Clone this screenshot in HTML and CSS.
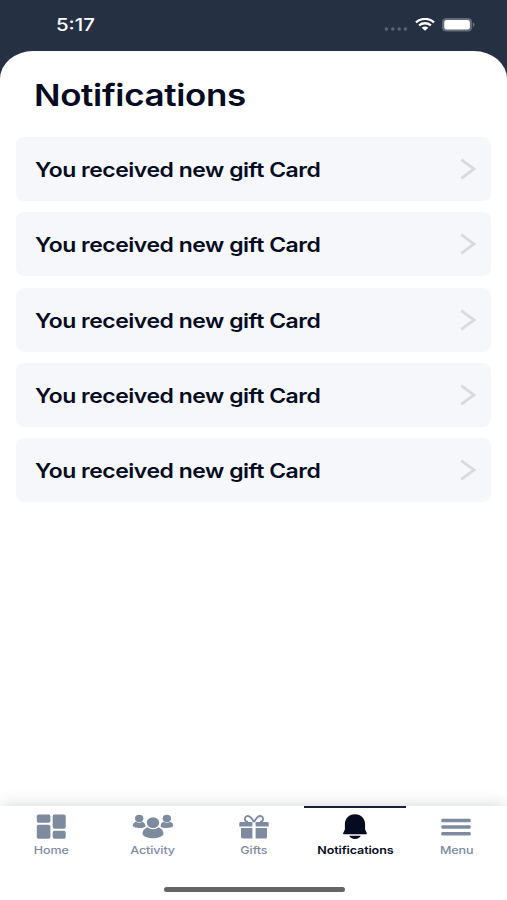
FILE: index.html
```html
<!DOCTYPE html>
<html lang="en">
<head>
<meta charset="utf-8">
<title>Notifications</title>
<link rel="stylesheet" href="styles.css">
</head>
<body>
<div class="app">
  <header class="status">
    <span class="time">5:17</span>
    <div class="indicators">
      <svg class="dots" width="24" height="4" viewBox="0 0 24 4"><circle cx="2.4" cy="2" r="1.8"/><circle cx="8.8" cy="2" r="1.8"/><circle cx="15.2" cy="2" r="1.8"/><circle cx="21.4" cy="2" r="1.8"/></svg>
      <svg class="wifi" width="20" height="13" viewBox="0 0 20 13"><path d="M1 4.3C6-.2 14-.2 19 4.3M4.1 7.4c3.4-2.9 8.4-2.9 11.8 0" fill="none" stroke="#fff" stroke-width="2.3"/><path d="M6.7 9.7c1.9-1.7 4.7-1.7 6.6 0L10 12.7z" fill="#fff"/></svg>
      <svg class="battery" width="33" height="14" viewBox="0 0 33 14"><rect x="0" y="0" width="30.2" height="13.6" rx="4.2" fill="#626b78"/><rect x="2.3" y="2.1" width="25.6" height="9.4" rx="2.3" fill="#fff"/><path d="M31 4.8c2.1.7 2.1 3.3 0 4z" fill="#6c7581"/></svg>
    </div>
  </header>
  <main class="sheet">
    <h1><span>Notifications</span></h1>
    <ul class="list">
      <li><span>You received new gift Card</span><svg width="16" height="22" viewBox="0 0 16 22"><path d="M1.3 1.7 14 11 1.3 20.3"/></svg></li>
      <li><span>You received new gift Card</span><svg width="16" height="22" viewBox="0 0 16 22"><path d="M1.3 1.7 14 11 1.3 20.3"/></svg></li>
      <li><span>You received new gift Card</span><svg width="16" height="22" viewBox="0 0 16 22"><path d="M1.3 1.7 14 11 1.3 20.3"/></svg></li>
      <li><span>You received new gift Card</span><svg width="16" height="22" viewBox="0 0 16 22"><path d="M1.3 1.7 14 11 1.3 20.3"/></svg></li>
      <li><span>You received new gift Card</span><svg width="16" height="22" viewBox="0 0 16 22"><path d="M1.3 1.7 14 11 1.3 20.3"/></svg></li>
    </ul>
  </main>
  <nav class="tabs">
    <a class="tab">
      <svg width="30" height="26" viewBox="0 0 30 26"><rect x=".8" y=".4" width="13.6" height="8.3" rx="1.8"/><rect x=".8" y="10.700" width="13.600" height="14" rx="1.800"/><rect x="16.700" y=".4" width="13" height="14.300" rx="1.800"/><rect x="16.700" y="16.700" width="13" height="8" rx="1.800"/></svg>
      <span>Home</span>
    </a>
    <a class="tab">
      <svg width="42" height="26" viewBox="0 0 42 26"><ellipse cx="7.200" cy="4.500" rx="4.200" ry="3.700"/><ellipse cx="34.800" cy="4.500" rx="4.200" ry="3.700"/><path d="M3.800 7.800C1.500 8.500.7 10.200.7 12.100c1.800 2.400 10.300 2.600 12.800.3-.2-2.200-1-3.900-3-4.600-1.900 1.200-4.700 1.200-6.700 0zM38.200 7.800c2.300.7 3.100 2.400 3.100 4.300-1.800 2.400-10.300 2.600-12.800.3.2-2.200 1-3.900 3-4.600 1.900 1.200 4.700 1.200 6.700 0z"/><ellipse cx="21" cy="8.600" rx="6.200" ry="5.400"/><path d="M15.500 13.300c-3.600 1.200-5.100 3.800-5 6.900 3 5.400 18 5.400 21 0 .1-3.100-1.400-5.700-5-6.900-2.900 2.500-8.100 2.500-11 0z"/></svg>
      <span>Activity</span>
    </a>
    <a class="tab">
      <svg width="30" height="26" viewBox="0 0 30 26"><path d="M14.900 8C12 2.400 9.700 1.400 7.700 2.200 4.800 3.500 5.500 7.800 9 8M15.100 8c2.900-5.600 5.200-6.600 7.200-5.800C25.200 3.500 24.500 7.800 21 8" fill="none" stroke="#7e8b9f" stroke-width="1.800"/><path d="M1.500 8h11.900v4.500H.3V9.200Q.3 8 1.500 8zM16.600 8h11.900q1.200 0 1.200 1.200v3.300H16.600zM2 14h11.400v10.500H3.400Q2 24.500 2 23.100zM16.600 14H28v9.100q0 1.400-1.400 1.400h-10z"/></svg>
      <span>Gifts</span>
    </a>
    <a class="tab active">
      <svg width="26" height="26" viewBox="0 0 26 26"><path d="M13 .2C6.600.2 2.900 4.600 2.900 10.400v5L1.300 18.700c-.5.9-.1 1.500 1 1.500h21.400c1.100 0 1.500-.6 1-1.500l-1.600-3.300v-5C23.100 4.600 19.400.2 13 .2zM7.300 21.800h11.400c-.8 4.100-10.600 4.100-11.400 0z"/></svg>
      <span>Notifications</span>
    </a>
    <a class="tab">
      <svg width="30" height="26" viewBox="0 0 30 26"><rect x=".3" y="4.700" width="29.400" height="3.500" rx="1.200"/><rect x=".3" y="11.300" width="29.400" height="3.500" rx="1.200"/><rect x=".3" y="18" width="29.400" height="3.500" rx="1.200"/></svg>
      <span>Menu</span>
    </a>
    <div class="home-bar"></div>
  </nav>
</div>
</body>
</html>
```
FILE: styles.css
```css
* { box-sizing: border-box; }
body { margin: 0; background: #253042; color: #050b20; font-family: Inter, "Liberation Sans", sans-serif; }
.app { height: 900px; display: flex; flex-direction: column; overflow: hidden; }
.status { height: 51px; flex: none; display: flex; justify-content: space-between; padding: 0 32px 0 56px; color: #fff; }
.time { height: 50px; line-height: 50px; font-size: 17px; font-weight: 500; transform: scaleX(1.2); transform-origin: left; }
.indicators { display: flex; align-items: center; height: 49px; }
.dots { fill: #596474; margin: 8px 7px 0 0; }
.wifi { margin-right: 7px; }
.sheet { flex: 1; background: #fff; border-radius: 33px 33px 0 0 / 28px 28px 0 0; padding: 25px 16px 0; }
h1 { margin: 0 0 0 18px; height: 61px; line-height: 39px; font-size: 30px; font-weight: 600; letter-spacing: -.3px; }
h1 span, .list span, .tab span { display: inline-block; white-space: nowrap; }
h1 span { transform: scaleX(1.165); transform-origin: left; }
.list { list-style: none; margin: 0; padding: 0; display: grid; gap: 11.3px; }
.list li { height: 64px; padding: 0 15px 0 19px; display: flex; align-items: center; justify-content: space-between; background: #f5f7fb; border-radius: 8px; font-size: 20px; font-weight: 600; letter-spacing: -.4px; }
.list span { padding-top: 2px; transform: scaleX(1.147); transform-origin: left; }
.list path { fill: none; stroke: #d8dade; stroke-width: 2.8; }
.tabs { height: 94px; flex: none; position: relative; display: grid; grid-template-columns: repeat(5, 101.2px); grid-template-rows: 1fr; padding-left: .9px; background: #fff; box-shadow: 0 -1px 16px -2px rgba(20, 35, 35, .22); }
.tab { display: flex; flex-direction: column; align-items: center; padding-top: 6px; border-top: 2px solid transparent; color: #7e8b9f; font-size: 11px; line-height: 14px; font-weight: 500; letter-spacing: -.1px; }
.tab svg { flex: none; fill: currentColor; margin-bottom: 3px; }
.tab span { transform: scaleX(1.14); }
.active { color: #050b20; border-color: #172238; font-weight: 600; }
.home-bar { position: absolute; left: 164px; bottom: 8px; width: 181px; height: 5px; border-radius: 3px; background: #656565; }
```
